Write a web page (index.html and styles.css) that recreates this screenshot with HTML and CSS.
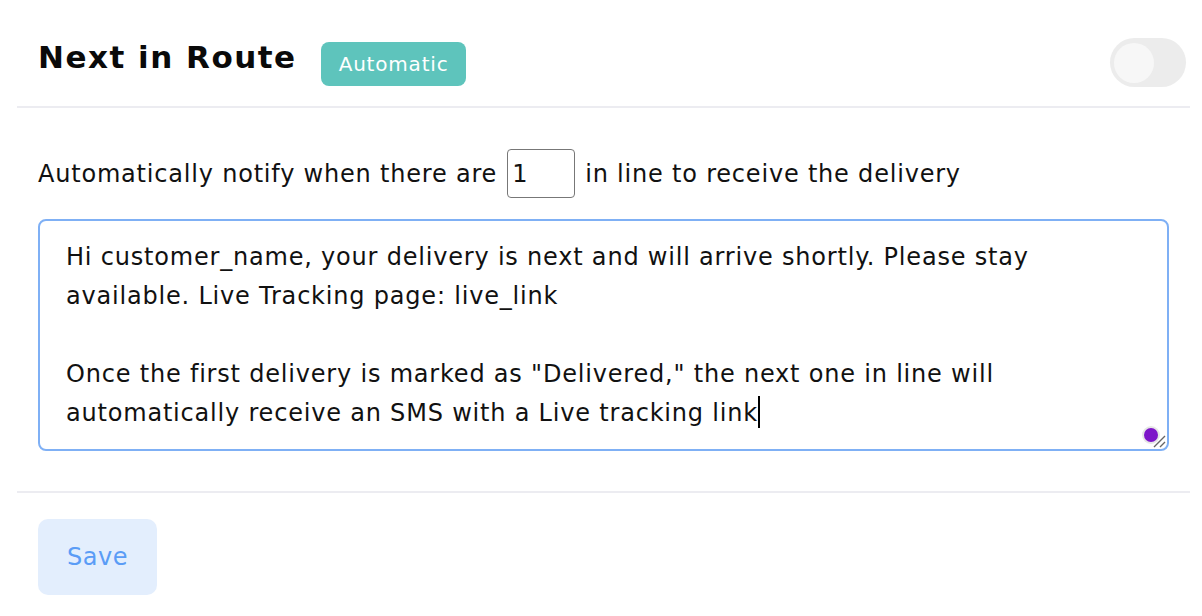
FILE: index.html
```html
<!DOCTYPE html>
<html lang="en">

<head>
  <meta charset="UTF-8">
  <meta name="viewport" content="width=device-width, initial-scale=1.0">
  <title>Next in Route</title>

  <link rel="stylesheet" href="styles.css">
</head>

<body>
  <div class="card">
    <div class="card-head">
      <h1 class="title">Next in Route</h1>
      <span class="badge">Automatic</span>
      <span class="toggle"><span class="knob"></span></span>
    </div>

    <div class="card-body">
      <div class="notify-row">
        Automatically notify when there are
        <input type="text" class="count" value="1">
        in line to receive the delivery
      </div>

      <div class="editor">
        <p>Hi customer_name, your delivery is next and will arrive shortly. Please stay<br>available. Live Tracking page: live_link</p>
        <p>Once the first delivery is marked as "Delivered," the next one in line will<br>automatically receive an SMS with a Live tracking link<span class="caret"></span></p>
        <span class="dot"></span>
        <svg class="grip" width="14" height="14" viewBox="0 0 14 14">
          <path d="M2 13 L13 2 M8 13 L13 8" stroke="#666" stroke-width="1.4" />
        </svg>
      </div>
    </div>

    <div class="card-foot">
      <button class="save">Save</button>
    </div>
  </div>
</body>

</html>
```

FILE: styles.css
```css
body {
  margin: 0;
  background: #fff;
  font-family: "DejaVu Sans", "Open Sans", sans-serif;
  color: #111;
  letter-spacing: 0.8px;
}
.card {
  margin: 0 12px 0 17px;
}
.card-head {
  height: 108px;
  box-sizing: border-box;
  display: flex;
  align-items: center;
  padding: 22px 4px 0 21px;
  border-bottom: 2px solid #ececf1;
}
.title {
  margin: 0 0 14px;
  font-size: 31px;
  font-weight: 700;
  letter-spacing: 1.5px;
  color: #0a0a0a;
}
.badge {
  margin-left: 24px;
  background: #5ec4bc;
  color: #fff;
  font-size: 20px;
  height: 44px;
  line-height: 44px;
  padding: 0 18px;
  border-radius: 8px;
}
.toggle {
  margin-left: auto;
  margin-bottom: 3px;
  width: 76px;
  height: 49px;
  border-radius: 25px;
  background: #ececec;
  display: flex;
  align-items: center;
  padding-left: 4px;
  box-sizing: border-box;
}
.knob {
  width: 40px;
  height: 40px;
  border-radius: 50%;
  background: #f7f7f7;
}
.card-body {
  padding: 41px 21px 40px;
  border-bottom: 2px solid #ececf1;
}
.notify-row {
  display: flex;
  align-items: center;
  gap: 10px;
  font-size: 24px;
  height: 49px;
}
.count {
  width: 68px;
  height: 49px;
  box-sizing: border-box;
  border: 1.5px solid #777;
  border-radius: 4px;
  font: inherit;
  padding: 0 4px;
  color: #111;
}
.editor {
  position: relative;
  margin-top: 21px;
  height: 232px;
  box-sizing: border-box;
  border: 2px solid #7fb0f5;
  border-radius: 8px;
  padding: 17px 26px;
  font-size: 24px;
  line-height: 39px;
}
.editor p {
  margin: 0 0 39px;
}
.caret {
  display: inline-block;
  width: 2px;
  height: 32px;
  background: #000;
  vertical-align: -7px;
}
.dot {
  position: absolute;
  right: 9px;
  bottom: 7px;
  width: 14px;
  height: 14px;
  border-radius: 50%;
  background: #7d15c9;
  box-shadow: 0 0 0 2px #e6e6e6;
}
.grip {
  position: absolute;
  right: 1px;
  bottom: 1px;
}
.card-foot {
  padding: 26px 21px 0;
}
.save {
  width: 119px;
  height: 76px;
  border: none;
  border-radius: 10px;
  background: #e3eefd;
  color: #5a9cf6;
  font-family: inherit;
  font-size: 24px;
  letter-spacing: 0.5px;
}
```
